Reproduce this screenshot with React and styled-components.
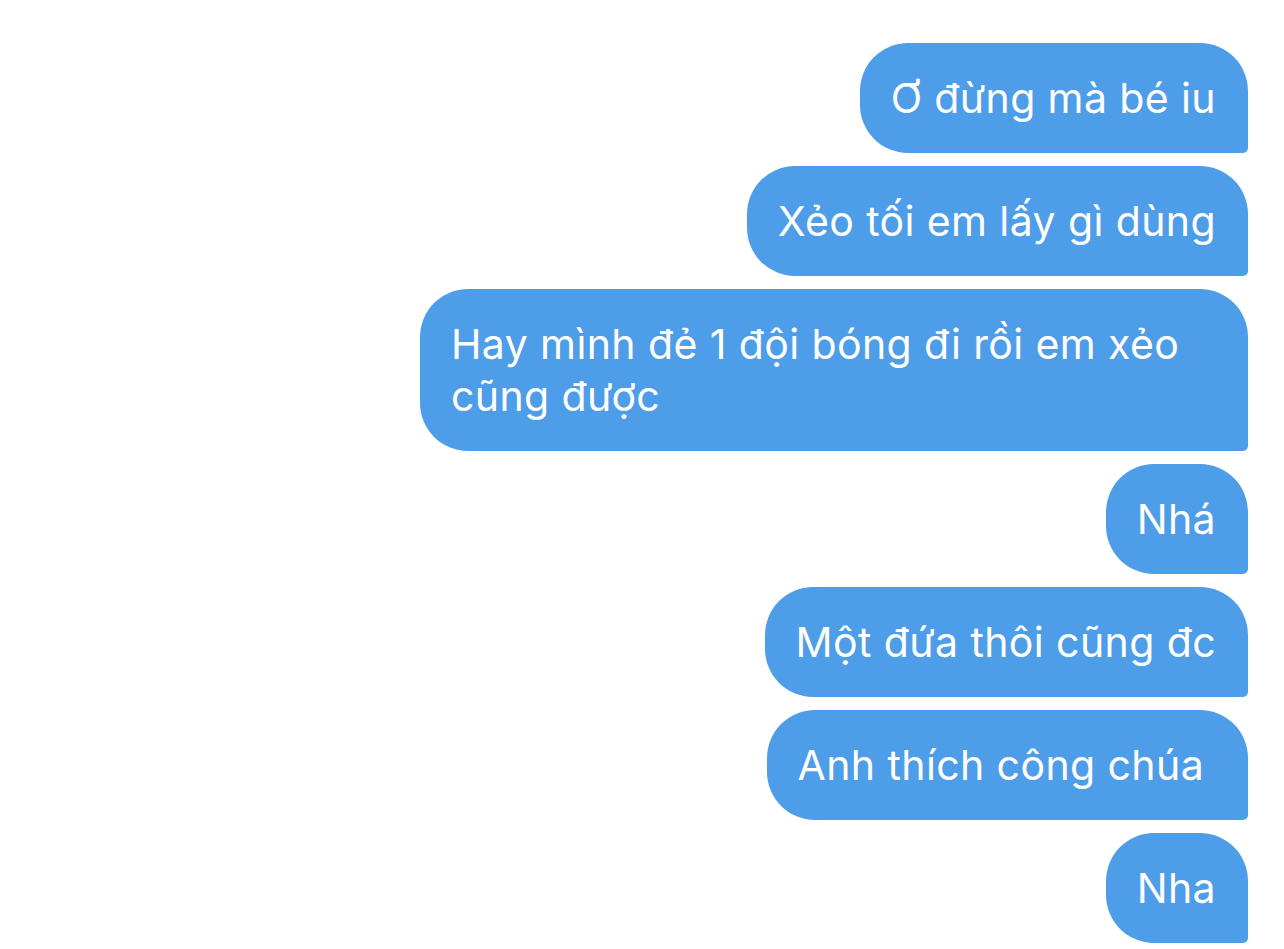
import React from "react";
import styled, { createGlobalStyle } from "styled-components";

const GlobalStyle = createGlobalStyle`
  body {
    margin: 0;
    background: #ffffff;
  }
`;

const Thread = styled.div`
  display: flex;
  flex-direction: column;
  align-items: flex-end;
  gap: 13px;
  padding: 43px 36px 0 0;
  font-family: Inter, "Noto Sans", "DejaVu Sans", sans-serif;
`;

const Bubble = styled.div`
  box-sizing: border-box;
  max-width: 828px;
  min-height: 110px;
  padding: 29px 32px 29px 31px;
  background: #4e9de9;
  color: #ffffff;
  font-size: 41px;
  line-height: 52px;
  letter-spacing: 0.4px;
  white-space: pre-wrap;
  border-radius: 48px 48px 5px 48px;
`;

const messages = [
  "Ơ đừng mà bé iu",
  "Xẻo tối em lấy gì dùng",
  "Hay mình đẻ 1 đội bóng đi rồi em xẻo cũng được",
  "Nhá",
  "Một đứa thôi cũng đc",
  "Anh thích công chúa ",
  "Nha",
];

const App = () => (
  <>
    <GlobalStyle />
    <Thread>
      {messages.map((text, i) => (
        <Bubble key={i}>{text}</Bubble>
      ))}
    </Thread>
  </>
);

export default App;
